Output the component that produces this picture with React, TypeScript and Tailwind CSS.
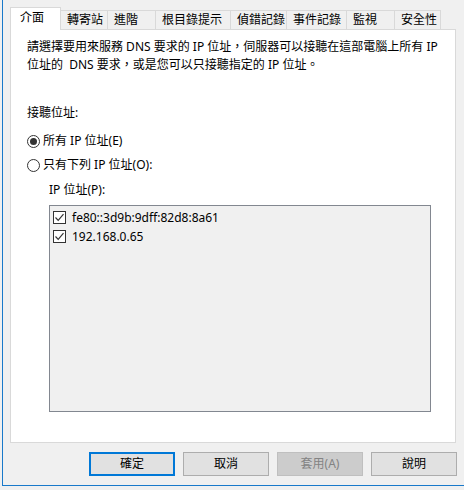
import React from "react";

const tabs = [
  { label: "介面", w: 51 },
  { label: "轉寄站", w: 47 },
  { label: "進階", w: 48 },
  { label: "根目錄提示", w: 75 },
  { label: "偵錯記錄", w: 56 },
  { label: "事件記錄", w: 60 },
  { label: "監視", w: 48 },
  { label: "安全性", w: 46 },
];

const addresses = ["fe80::3d9b:9dff:82d8:8a61", "192.168.0.65"];

function Radio({ checked }: { checked?: boolean }) {
  return (
    <span className="flex h-[13px] w-[13px] items-center justify-center rounded-full border border-[#333333] bg-white">
      {checked ? <span className="h-[7px] w-[7px] rounded-full bg-[#333333]" /> : null}
    </span>
  );
}

function Check() {
  return (
    <span className="flex h-[13px] w-[13px] items-center justify-center border border-[#333333] bg-white">
      <svg width="11" height="11" viewBox="0 0 11 11">
        <polyline points="1.5,5.5 4.2,8.3 9.5,2.2" fill="none" stroke="#333333" strokeWidth="1.2" />
      </svg>
    </span>
  );
}

function Button({ label, variant }: { label: string; variant?: "default" | "disabled" }) {
  const cls =
    variant === "default"
      ? "border-2 border-[#0078d7] bg-[#e1e1e1] text-black"
      : variant === "disabled"
        ? "border border-[#bfbfbf] bg-[#cccccc] text-[#838383]"
        : "border border-[#adadad] bg-[#e1e1e1] text-black";
  return (
    <div className={`flex h-[24px] w-[86px] items-center justify-center text-[12px] ${cls}`}>
      {label}
    </div>
  );
}

export default function App() {
  return (
    <div
      className="h-[490px] w-[464px] bg-[#f0f0f0] pl-[2px] text-[12px] leading-[18px] text-black"
      style={{ fontFamily: '"Noto Sans", "Noto Sans CJK TC", sans-serif' }}
    >
      <div className="flex h-[486px] flex-col border-b border-l border-[#1979ca] pl-[7px] pr-[7px] pt-[7px]">
        {/* tabs */}
        <div className="relative z-10 flex h-[22px] items-end">
          {tabs.map((t, i) =>
            i === 0 ? (
              <div
                key={t.label}
                className="-mb-px flex h-[23px] items-center border-l border-r border-t border-[#d9d9d9] bg-white pl-[9px] pb-[2px]"
                style={{ width: t.w }}
              >
                {t.label}
              </div>
            ) : (
              <div
                key={t.label}
                className="flex h-[19px] items-center border-r border-t border-[#d9d9d9] bg-[#f0f0f0] pl-[6px] whitespace-nowrap"
                style={{ width: t.w }}
              >
                {t.label}
              </div>
            ),
          )}
        </div>

        {/* panel */}
        <div className="mr-px flex h-[414px] flex-col border border-[#d9d9d9] bg-white pl-[16px] pt-[8px]">
          <p className="whitespace-nowrap">
            請選擇要用來服務 DNS 要求的 IP 位址，伺服器可以接聽在這部電腦上所有 IP
            <br />
            位址的&nbsp; DNS 要求，或是您可以只接聽指定的 IP 位址。
          </p>

          <div className="mt-[30px]">接聽位址:</div>

          <div className="mt-[7px] flex h-[24px] items-center gap-[3px]">
            <Radio checked />
            <span>所有 IP 位址(E)</span>
          </div>
          <div className="flex h-[24px] items-center gap-[3px]">
            <Radio />
            <span>只有下列 IP 位址(O):</span>
          </div>

          <div className="ml-[22px] mt-[4px]">IP 位址(P):</div>

          <div className="ml-[22px] mt-[6px] h-[207px] w-[382px] border border-[#828790] bg-[#f0f0f0] pl-[3px] pt-[2px]">
            {addresses.map((a) => (
              <div key={a} className="flex h-[19px] items-center gap-[6px]">
                <Check />
                <span>{a}</span>
              </div>
            ))}
          </div>
        </div>

        {/* buttons */}
        <div className="mt-[9px] flex justify-end gap-[8px]">
          <Button label="確定" variant="default" />
          <Button label="取消" />
          <Button label="套用(A)" variant="disabled" />
          <Button label="說明" />
        </div>
      </div>
    </div>
  );
}
